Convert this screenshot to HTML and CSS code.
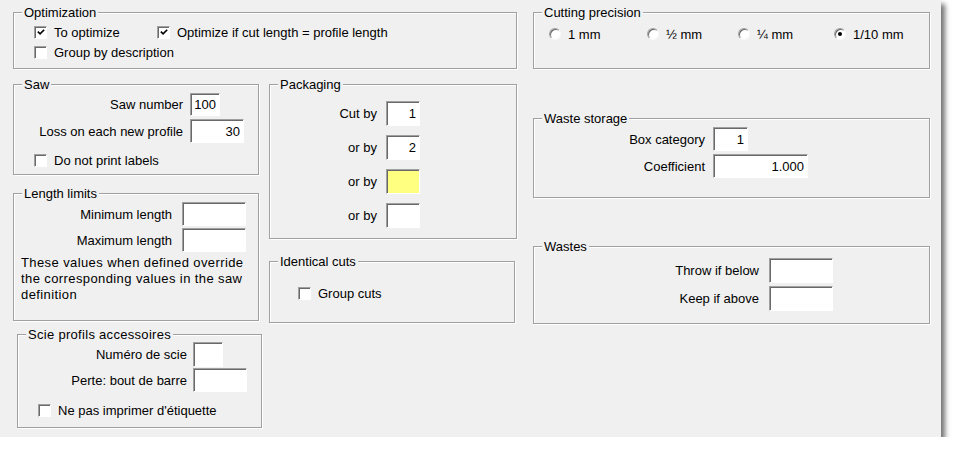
FILE: index.html
```html
<!DOCTYPE html>
<html>
<head>
<meta charset="utf-8">
<link rel="stylesheet" href="styles.css">
</head>
<body>
<div class="dialog">
  <div class="left-area">
    <div class="group opt">
      <span class="title">Optimization</span>
      <div class="opt-row">
        <label class="chk w-opt1"><span class="box"><svg viewBox="0 0 11 11" width="11" height="11"><path d="M2 4.5 L4.5 7 L9 2.5" fill="none" stroke="#000" stroke-width="1.8"/></svg></span>To optimize</label>
        <label class="chk"><span class="box"><svg viewBox="0 0 11 11" width="11" height="11"><path d="M2 4.5 L4.5 7 L9 2.5" fill="none" stroke="#000" stroke-width="1.8"/></svg></span>Optimize if cut length = profile length</label>
      </div>
      <label class="chk row2"><span class="box"></span>Group by description</label>
    </div>
    <div class="cols">
      <div class="col-a">
        <div class="group saw">
          <span class="title">Saw</span>
          <div class="form">
            <span class="lbl">Saw number</span><span class="inp w30 h23">100</span>
            <span class="lbl">Loss on each new profile</span><span class="inp w54 h24">30</span>
          </div>
          <label class="chk"><span class="box"></span>Do not print labels</label>
        </div>
        <div class="group limits">
          <span class="title">Length limits</span>
          <div class="form">
            <span class="lbl">Minimum length</span><span class="inp w64 h24"></span>
            <span class="lbl">Maximum length</span><span class="inp w64 h24"></span>
          </div>
          <p class="note">These values when defined override<br>the corresponding values in the saw<br>definition</p>
        </div>
        <div class="group scie">
          <span class="title">Scie profils accessoires</span>
          <div class="form">
            <span class="lbl">Numéro de scie</span><span class="inp w30 h25"></span>
            <span class="lbl">Perte: bout de barre</span><span class="inp w54 h24"></span>
          </div>
          <label class="chk"><span class="box"></span>Ne pas imprimer d'étiquette</label>
        </div>
      </div>
      <div class="col-b">
        <div class="group pack">
          <span class="title">Packaging</span>
          <div class="form">
            <span class="lbl">Cut by</span><span class="inp w33 h25">1</span>
            <span class="lbl">or by</span><span class="inp w33 h25">2</span>
            <span class="lbl">or by</span><span class="inp w33 h25 yellow"></span>
            <span class="lbl">or by</span><span class="inp w33 h25"></span>
          </div>
        </div>
        <div class="group ident">
          <span class="title">Identical cuts</span>
          <label class="chk"><span class="box"></span>Group cuts</label>
        </div>
      </div>
    </div>
  </div>
  <div class="right-col">
    <div class="group prec">
      <span class="title">Cutting precision</span>
      <div class="radios">
        <label class="radio r1"><span class="dot"></span>1 mm</label>
        <label class="radio r2"><span class="dot"></span>½ mm</label>
        <label class="radio r3"><span class="dot"></span>¼ mm</label>
        <label class="radio"><span class="dot on"></span>1/10 mm</label>
      </div>
    </div>
    <div class="group storage">
      <span class="title">Waste storage</span>
      <div class="form">
        <span class="lbl">Box category</span><span class="inp w34 h24">1</span>
        <span class="lbl">Coefficient</span><span class="inp w94 h24">1.000</span>
      </div>
    </div>
    <div class="group wastes">
      <span class="title">Wastes</span>
      <div class="form">
        <span class="lbl">Throw if below</span><span class="inp w64 h25"></span>
        <span class="lbl">Keep if above</span><span class="inp w64 h25"></span>
      </div>
    </div>
  </div>
</div>
</body>
</html>
```
FILE: styles.css
```css
html, body {
  margin: 0;
  padding: 0;
  background: #ffffff;
}
body {
  font-family: "Liberation Sans", Arial, sans-serif;
  font-size: 13px;
  color: #000;
}
.dialog {
  box-sizing: border-box;
  width: 941px;
  height: 437px;
  background: #f0f0f0;
  box-shadow: 4px 4px 5px rgba(0, 0, 0, 0.55);
  padding: 12px 0 0 13px;
  display: flex;
  align-items: flex-start;
}
.left-area {
  width: 504px;
}
.right-col {
  width: 397px;
  margin-left: 16px;
}
.cols {
  display: flex;
  align-items: flex-start;
  margin-top: 15px;
}
.col-a {
  width: 249px;
}
.col-b {
  width: 248px;
  margin-left: 7px;
}

.group {
  position: relative;
  box-sizing: border-box;
  border: 1px solid #a0a0a0;
  box-shadow: inset 1px 1px 0 #fff, 1px 1px 0 #fff;
}
.title {
  position: absolute;
  top: -8px;
  left: 8px;
  padding: 0 2px;
  line-height: 15px;
  background: #f0f0f0;
  white-space: nowrap;
}
.scie .title {
  letter-spacing: 0.3px;
}

/* checkboxes */
.chk {
  display: flex;
  align-items: center;
  height: 16px;
  white-space: nowrap;
}
.box {
  box-sizing: border-box;
  width: 13px;
  height: 13px;
  margin-right: 7px;
  background: #fff;
  border-top: 1px solid #a0a0a0;
  border-left: 1px solid #a0a0a0;
  border-right: 1px solid #fff;
  border-bottom: 1px solid #fff;
  box-shadow: inset 1px 1px 0 #696969;
  display: flex;
  align-items: center;
  justify-content: center;
  flex: none;
}
.box svg {
  display: block;
  margin: 1px 0 0 1px;
}

/* radios */
.radios {
  display: flex;
  padding: 13px 0 0 15px;
}
.radio {
  display: flex;
  align-items: center;
  height: 16px;
  white-space: nowrap;
}
.r1 { width: 98px; }
.r2 { width: 91px; }
.r3 { width: 96px; }
.dot {
  box-sizing: border-box;
  width: 12px;
  height: 12px;
  margin-right: 7px;
  border-radius: 50%;
  background: #fff;
  border: 1px solid;
  border-color: #a0a0a0 #f8f8f8 #f8f8f8 #a0a0a0;
  box-shadow: inset 1px 1px 0 #696969;
  position: relative;
  flex: none;
}
.dot.on::after {
  content: "";
  position: absolute;
  left: 3px;
  top: 3px;
  width: 4px;
  height: 4px;
  border-radius: 50%;
  background: #000;
}

/* inputs */
.form {
  display: grid;
  align-items: center;
  justify-items: start;
}
.lbl {
  justify-self: end;
  white-space: nowrap;
}
.inp {
  box-sizing: border-box;
  display: flex;
  align-items: center;
  justify-content: flex-end;
  padding: 0 3px 0 0;
  background: #fff;
  border-top: 1px solid #a0a0a0;
  border-left: 1px solid #a0a0a0;
  border-right: 1px solid #fff;
  border-bottom: 1px solid #fff;
  box-shadow: inset 1px 1px 0 #696969;
}
.inp.yellow { background: #ffff80; }
.w30 { width: 30px; }
.w33 { width: 34px; }
.w34 { width: 35px; }
.w54 { width: 54px; }
.w64 { width: 64px; }
.w94 { width: 95px; }
.h23 { height: 23px; }
.h24 { height: 24px; }
.h25 { height: 25px; }

/* Optimization */
.opt {
  height: 57px;
  padding: 11px 0 0 20px;
}
.opt-row {
  display: flex;
}
.w-opt1 { width: 123px; }
.row2 { margin-top: 4px; }

/* Saw */
.saw {
  width: 246px;
  height: 91px;
  padding: 8px 0 0 0;
}
.saw .form {
  grid-template-columns: 169px auto;
  column-gap: 7px;
  row-gap: 3px;
}
.saw .chk {
  margin: 9px 0 0 20px;
}

/* Length limits */
.limits {
  width: 246px;
  height: 128px;
  margin-top: 18px;
  padding-top: 8px;
}
.limits .form {
  grid-template-columns: 158px auto;
  column-gap: 10px;
  row-gap: 2px;
}
.note {
  margin: 3px 0 0 7px;
  line-height: 16px;
  letter-spacing: 0.4px;
  white-space: nowrap;
}

/* Scie */
.scie {
  width: 245px;
  height: 94px;
  margin: 13px 0 0 4px;
  padding-top: 7px;
}
.scie .form {
  grid-template-columns: 169px auto;
  column-gap: 6px;
  row-gap: 1px;
}
.scie .chk {
  margin: 10px 0 0 20px;
}

/* Packaging */
.pack {
  width: 248px;
  height: 155px;
  padding-top: 16px;
}
.pack .form {
  grid-template-columns: 107px auto;
  column-gap: 9px;
  row-gap: 9px;
}

/* Identical cuts */
.ident {
  width: 246px;
  height: 62px;
  margin-top: 22px;
  padding: 23px 0 0 28px;
}

/* Cutting precision */
.prec {
  height: 57px;
}

/* Waste storage */
.storage {
  height: 80px;
  margin-top: 49px;
  padding-top: 8px;
}
.storage .form {
  grid-template-columns: 171px auto;
  column-gap: 8px;
  row-gap: 3px;
}

/* Wastes */
.wastes {
  height: 78px;
  margin-top: 48px;
  padding-top: 11px;
}
.wastes .form {
  grid-template-columns: 225px auto;
  column-gap: 10px;
  row-gap: 3px;
}
```
